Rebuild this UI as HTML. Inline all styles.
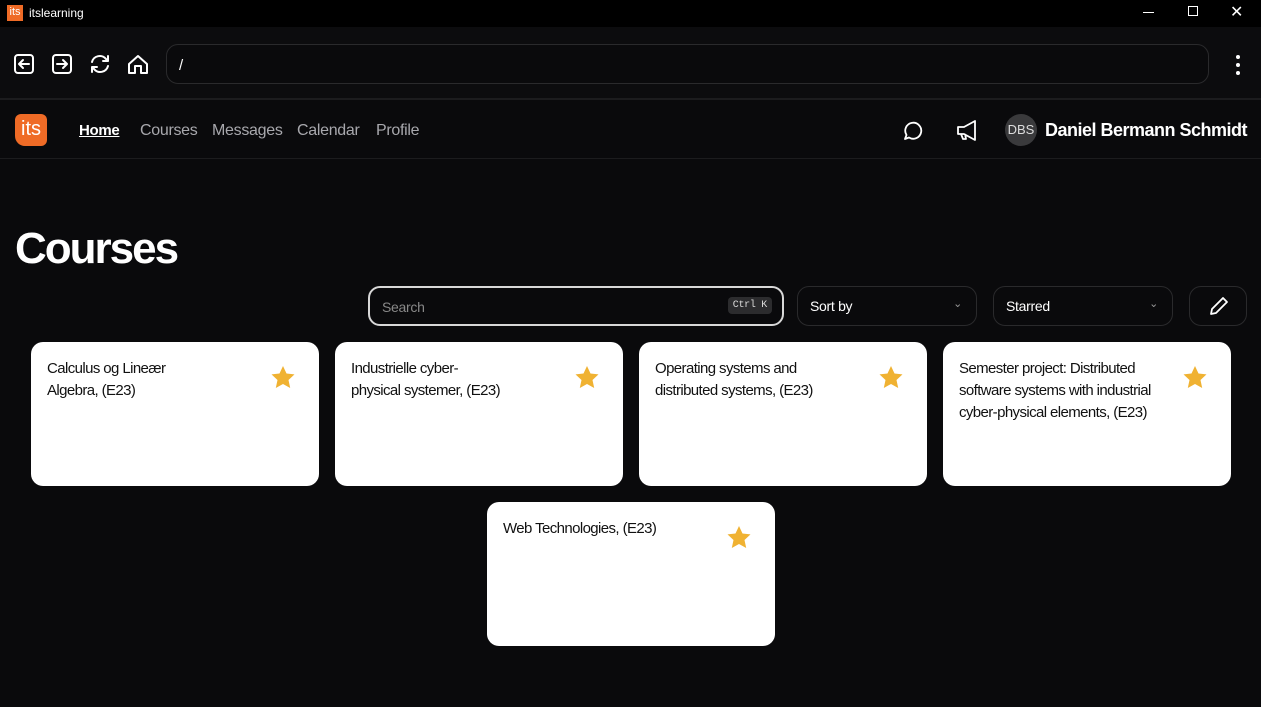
<!DOCTYPE html>
<html><head><style>
*{margin:0;padding:0;box-sizing:border-box}
body{width:1261px;height:707px;background:#0a0a0c;font-family:"Liberation Sans",sans-serif;color:#fff;position:relative;overflow:hidden}
.abs{position:absolute}
.title{left:0;top:0;width:1261px;height:27px;background:#000}
.tb{left:0;top:27px;width:1261px;height:73px;background:#0c0c0e;border-bottom:2px solid #1c1c1e}
.url{left:166px;top:44px;width:1043px;height:40px;border:1px solid #2a2a2c;border-radius:12px;background:#0a0a0c}
.nav{left:0;top:101px;width:1261px;height:58px;border-bottom:1px solid #1c1c1e}
.nav a{position:absolute;top:122px;font-size:16px;color:#a8a8ad;text-decoration:none;letter-spacing:-0.3px}
.card{position:absolute;width:288px;height:144px;background:#fff;border-radius:12px;color:#111;font-size:15px;line-height:22px;padding:16px;letter-spacing:-0.6px}
.card .t{width:170px}
.star{position:absolute;right:22px;top:22px}
.box{position:absolute;top:286px;height:40px;border:1px solid #2a2a2c;border-radius:12px;font-size:14px;padding:11px 12px;letter-spacing:-0.3px}
</style></head><body>
<div class="abs title"></div>
<div class="abs" style="left:7px;top:5px;width:16px;height:16px;background:#ef6b26;font-size:11px;line-height:15px;text-align:center;color:#fff">its</div>
<div class="abs" style="left:29px;top:6px;font-size:12px">itslearning</div>
<div class="abs" style="left:1143px;top:12px;width:11px;height:1px;background:#fff"></div>
<div class="abs" style="left:1188px;top:6px;width:10px;height:10px;border:1px solid #fff"></div>
<div class="abs" style="left:1230px;top:2px;font-size:16px">✕</div>
<div class="abs tb"></div>
<svg class="abs" style="left:12px;top:52px" width="140" height="26" fill="none" stroke="#fff" stroke-width="2" stroke-linecap="round" stroke-linejoin="round">
<rect x="3" y="3" width="18" height="18" rx="3"/><path d="M17 12H7M11 8l-4 4 4 4"/>
<rect x="41" y="3" width="18" height="18" rx="3"/><path d="M45 12h10M51 8l4 4-4 4"/>
<path d="M80 10a8 8 0 0 1 14-3l2 2M96 4v5h-5M96 14a8 8 0 0 1-14 3l-2-2M80 20v-5h5"/>
<path d="M117 12l9-8 9 8v9h-6v-7h-6v7h-6z"/>
</svg>
<div class="abs url"></div>
<div class="abs" style="left:179px;top:57px;font-size:15px">/</div>
<div class="abs" style="left:1236px;top:55px;width:4px;height:4px;border-radius:2px;background:#fff;box-shadow:0 8px 0 #fff,0 16px 0 #fff"></div>
<div class="abs nav"></div>
<div class="abs" style="left:15px;top:114px;width:32px;height:32px;background:#ef6b26;border-radius:6px 6px 6px 10px;font-size:20px;line-height:30px;text-align:center;color:#fff">its</div>
<div class="nav"><a style="left:79px;color:#fff;font-weight:bold;text-decoration:underline;font-size:15px">Home</a><a style="left:140px">Courses</a><a style="left:212px">Messages</a><a style="left:297px">Calendar</a><a style="left:376px">Profile</a></div>
<svg class="abs" style="left:900px;top:118px" width="90" height="26" fill="none" stroke="#fff" stroke-width="1.8" stroke-linejoin="round">
<path d="M5 21l1.5-4A8 8 0 1 1 9 19.5z"/>
<path d="M58 9h6l11-6v19l-11-6h-6zM61 16l2 5h3l-1-5"/>
</svg>
<div class="abs" style="left:1005px;top:114px;width:32px;height:32px;border-radius:16px;background:#3a3a3c;font-size:13px;line-height:32px;text-align:center;color:#ddd">DBS</div>
<div class="abs" style="left:1045px;top:120px;font-size:18px;font-weight:bold;letter-spacing:-0.5px">Daniel Bermann Schmidt</div>
<div class="abs" style="left:15px;top:224px;font-size:44px;font-weight:bold;letter-spacing:-2px">Courses</div>
<div class="box" style="left:368px;width:416px;border:2px solid #d8d8d8;color:#888">Search<span style="position:absolute;right:10px;top:9px;background:#2c2c2e;color:#ddd;font-family:'Liberation Mono';font-size:10px;padding:3px 5px;border-radius:4px">Ctrl K</span></div>
<div class="box" style="left:797px;width:180px">Sort by<span style="position:absolute;right:14px;top:10px;color:#999;font-size:11px">⌄</span></div>
<div class="box" style="left:993px;width:180px">Starred<span style="position:absolute;right:14px;top:10px;color:#999;font-size:11px">⌄</span></div>
<div class="box" style="left:1189px;width:58px"><svg style="position:absolute;left:18px;top:8px" width="22" height="22" fill="none" stroke="#fff" stroke-width="1.8" stroke-linejoin="round"><path d="M3 19l1-5L15 3l4 4L8 18z"/></svg></div>
<svg width="0" height="0" style="position:absolute"><defs><path id="s" d="M14 2l3.5 7.5 8 .9-6 5.6 1.7 8L14 20 6.8 24l1.7-8-6-5.6 8-.9z" fill="#f0b232"/></defs></svg>
<div class="card" style="left:31px;top:342px"><div class="t">Calculus og Lineær Algebra, (E23)</div><svg class="star" width="28" height="28"><use href="#s"/></svg></div>
<div class="card" style="left:335px;top:342px"><div class="t" style="width:200px">Industrielle cyber-<br>physical systemer, (E23)</div><svg class="star" width="28" height="28"><use href="#s"/></svg></div>
<div class="card" style="left:639px;top:342px"><div class="t" style="width:200px">Operating systems and distributed systems, (E23)</div><svg class="star" width="28" height="28"><use href="#s"/></svg></div>
<div class="card" style="left:943px;top:342px"><div class="t" style="width:215px">Semester project: Distributed software systems with industrial cyber-physical elements, (E23)</div><svg class="star" width="28" height="28"><use href="#s"/></svg></div>
<div class="card" style="left:487px;top:502px"><div class="t">Web Technologies, (E23)</div><svg class="star" width="28" height="28"><use href="#s"/></svg></div>
</body></html>
